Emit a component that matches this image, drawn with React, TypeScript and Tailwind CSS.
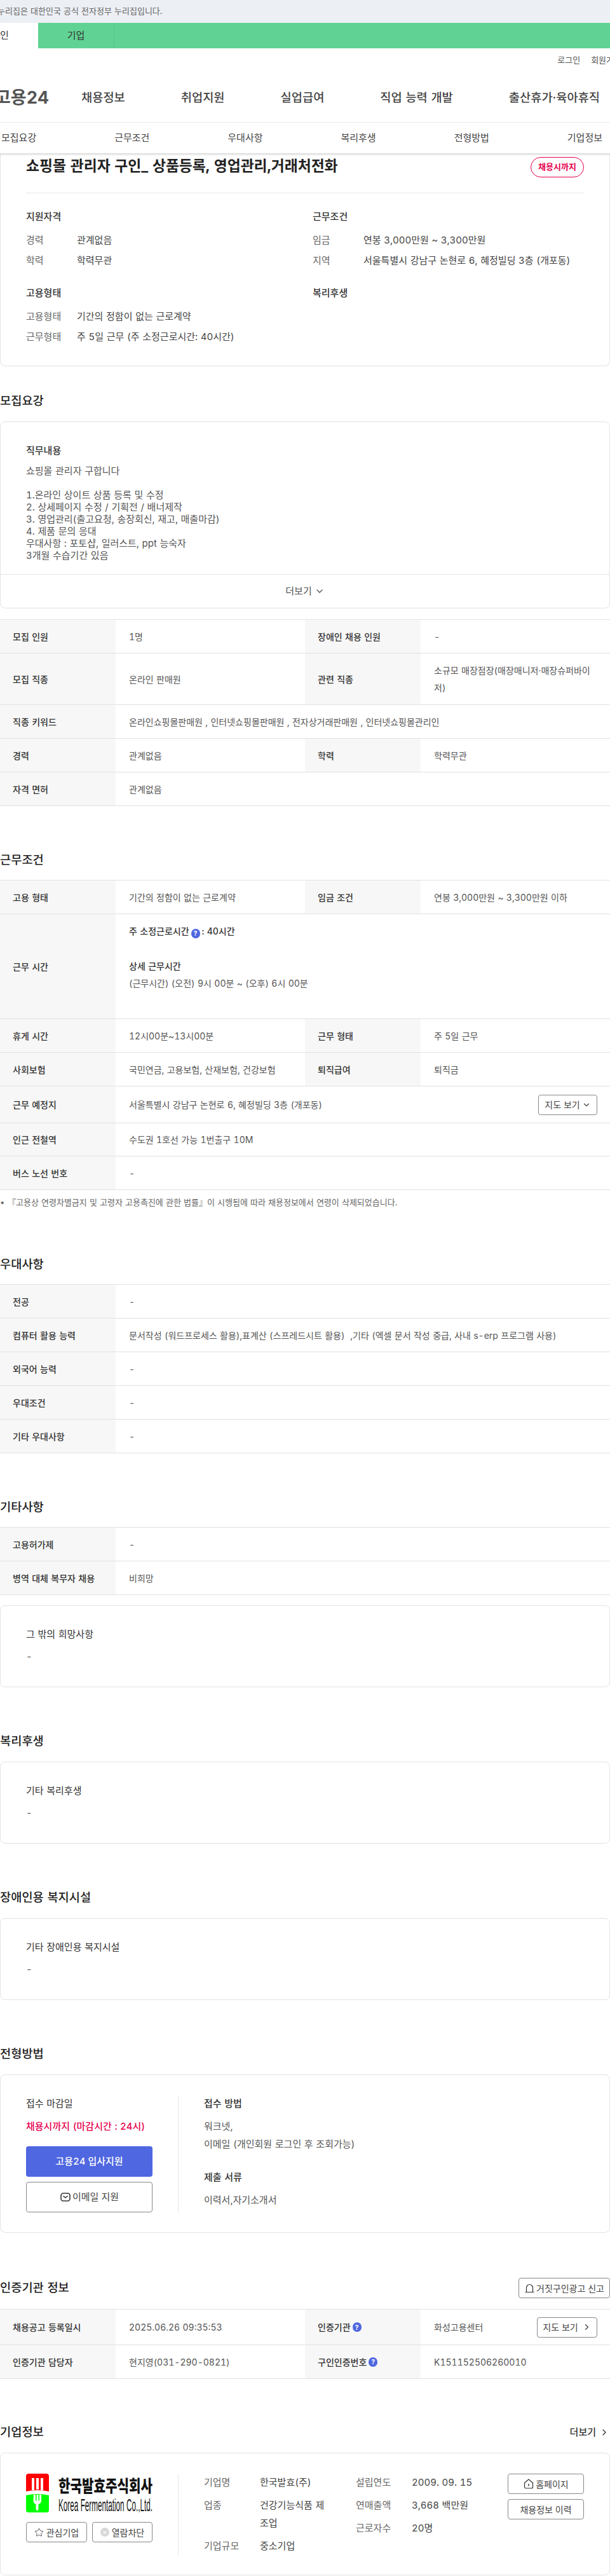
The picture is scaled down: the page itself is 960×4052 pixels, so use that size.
import type { ReactNode } from "react"
import { ChevronDown, ChevronRight, Star } from "lucide-react"

const font = '"Inter", "Noto Sans CJK KR", sans-serif'

function Help() {
  return (
    <span className="mx-[3px] inline-flex h-[15px] w-[14px] items-center justify-center rounded-full bg-[#4f67e0] align-[-2px] text-[10px] font-bold leading-none text-white">
      ?
    </span>
  )
}

function Heading({ children }: { children: ReactNode }) {
  return <h2 className="text-[18.7px] font-medium leading-[28px] text-[#222]">{children}</h2>
}

function Card({ className = "", children }: { className?: string; children: ReactNode }) {
  return <div className={`rounded-[8px] border border-[#e3e3e3] bg-white ${className}`}>{children}</div>
}

function Th({ children }: { children: ReactNode }) {
  return (
    <div className="flex items-center bg-[#f7f7f7] pl-5 text-[14px] font-medium text-[#333]">{children}</div>
  )
}

function Td({ wide, children }: { wide?: boolean; children: ReactNode }) {
  return (
    <div className={`flex items-center pl-[21px] pr-[20px] text-[14px] leading-[27px] text-[#555] ${wide ? "col-span-3" : ""}`}>
      <div className="w-full">{children}</div>
    </div>
  )
}

type Row = { h?: string; cells: [ReactNode, ReactNode] | [ReactNode, ReactNode, ReactNode, ReactNode] }

function Table({ rows }: { rows: Row[] }) {
  return (
    <div className="mt-[17px] border-b border-[#e2e2e2]">
      {rows.map((row, i) => (
        <div
          key={i}
          className={`grid grid-cols-[182px_298px_182px_298px] border-t border-[#e2e2e2] ${row.h ?? "h-[53px]"}`}
        >
          <Th>{row.cells[0]}</Th>
          {row.cells.length === 2 ? (
            <Td wide>{row.cells[1]}</Td>
          ) : (
            <>
              <Td>{row.cells[1]}</Td>
              <Th>{row.cells[2]}</Th>
              <Td>{row.cells[3]}</Td>
            </>
          )}
        </div>
      ))}
    </div>
  )
}

function InfoGroup({ title, rows }: { title: string; rows: [string, string][] }) {
  return (
    <div>
      <h3 className="text-[15px] font-medium leading-6 text-[#333]">{title}</h3>
      <dl className="mt-[9px]">
        {rows.map(([k, v]) => (
          <div key={k} className="flex h-8 items-center text-[15px]">
            <dt className="w-[80px] text-[#666]">{k}</dt>
            <dd className="text-[#444]">{v}</dd>
          </div>
        ))}
      </dl>
    </div>
  )
}

function TextCard({ title, children }: { title: string; children: ReactNode }) {
  return (
    <Card className="px-10 pb-9 pt-[33px]">
      <h3 className="text-[15px] leading-6 text-[#333]">{title}</h3>
      <p className="mt-3 text-[15px] leading-[22px] text-[#555]">{children}</p>
    </Card>
  )
}

function OutlineButton({ className = "", children }: { className?: string; children: ReactNode }) {
  return (
    <button className={`flex items-center justify-center rounded-[4px] border border-[#888] bg-white text-[#444] ${className}`}>
      {children}
    </button>
  )
}

function Logo() {
  return (
    <svg width="199" height="61" viewBox="0 0 199 61" className="block">
      <path d="M4 0H32a4 4 0 0 1 4 4V28Q18 24 0 28V4a4 4 0 0 1 4-4Z" fill="#f00" />
      <path d="M0 34Q18 30 36 34V57a4 4 0 0 1-4 4H4a4 4 0 0 1-4-4Z" fill="#0f0" />
      <path d="M9 7h4v19H9ZM16 7h4v18h-4ZM23 7h4v19h-4Z" fill="#fff" />
      <path d="M12 33h3v8q0 2 1.5 2V33h3v10q1.500 0 1.500-2v-8h3v9q0 5-4.500 6v8q0 2-2 2t-2-2v-8q-4-1-4-6Z" fill="#fff" />
      <text
        x="51"
        y="20.500"
        transform="scale(1 1.4)"
        fontSize="19"
        fontWeight="900"
        fill="#111"
        textLength="148"
        lengthAdjust="spacingAndGlyphs"
        fontFamily={font}
      >
        한국발효주식회사
      </text>
      <text
        x="51"
        y="59"
        fontSize="28"
        fill="#111"
        textLength="148"
        lengthAdjust="spacingAndGlyphs"
        fontFamily='"Liberation Sans", sans-serif'
      >
        Korea Fermentation Co.,Ltd.
      </text>
    </svg>
  )
}

const mainNav = ["채용정보", "취업지원", "실업급여", "직업 능력 개발", "출산휴가·육아휴직"]
const subNav = ["모집요강", "근무조건", "우대사항", "복리후생", "전형방법", "기업정보"]

const jobLines = `쇼핑몰 관리자 구합니다

1.온라인 상이트 상품 등록 및 수정
2. 상세페이지 수정 / 기획전 / 배너제작
3. 영업관리(출고요청, 송장회신, 재고, 매출마감)
4. 제품 문의 응대
우대사항 : 포토샵, 일러스트, ppt 능숙자
3개월 수습기간 있음`

export default function App() {
  return (
    <div
      className="w-full overflow-hidden bg-white text-[#444] tabular-nums [word-spacing:0.04em]"
      style={{ fontFamily: font }}
    >
      <div className="flex h-9 items-center whitespace-nowrap bg-[#eceff4] text-[13px] text-[#666]">
        <span className="-ml-[20px]">이 누리집은 대한민국 공식 전자정부 누리집입니다.</span>
      </div>

      <div className="flex h-10 bg-[#60d394] text-[15px] text-[#333]">
        <div className="-ml-[60px] flex w-[120px] items-center justify-center bg-white">개인</div>
        <div className="flex w-[120px] items-center justify-center border-r border-[#55c587]">기업</div>
      </div>

      <div className="mt-[9px] flex h-5 justify-end gap-[17px] whitespace-nowrap text-[13px] text-[#555]">
        <span>로그인</span>
        <span className="-mr-[18px]">회원가입</span>
      </div>

      <div className="mt-[29px] flex h-10 items-center whitespace-nowrap text-[#444]">
        <div className="-ml-[8px] w-[136px] shrink-0 text-[27px] font-bold text-[#555]">고용24</div>
        <nav className="flex gap-[88px] text-[18.7px] font-medium">
          {mainNav.map((n) => (
            <a key={n}>{n}</a>
          ))}
        </nav>
      </div>

      <div className="relative z-10 mt-[18px] flex h-[49px] items-center justify-between border-t border-[#eee] bg-white pl-[2px] pr-[12px] text-[15px] text-[#444] shadow-[0_2px_3px_rgba(0,0,0,0.16)]">
        {subNav.map((n) => (
          <a key={n}>{n}</a>
        ))}
      </div>

      <div className="rounded-b-[8px] border border-t-0 border-[#e3e3e3] px-10 pb-[29px] pt-[6px]">
        <div className="flex items-start justify-between border-b border-[#e9e9e9] pb-[24px]">
          <h1 className="text-[22.8px] font-bold leading-[28px] text-[#222]">
            쇼핑몰 관리자 구인_ 상품등록, 영업관리,거래처전화
          </h1>
          <span className="flex h-8 w-[84px] items-center justify-center rounded-full border border-[#e6004d] text-[13px] font-bold text-[#e6004d]">
            채용시까지
          </span>
        </div>
        <div className="mt-[25px] grid grid-cols-[451px_1fr] gap-y-[23px]">
          <InfoGroup title="지원자격" rows={[["경력", "관계없음"], ["학력", "학력무관"]]} />
          <InfoGroup
            title="근무조건"
            rows={[
              ["임금", "연봉 3,000만원 ~ 3,300만원"],
              ["지역", "서울특별시 강남구 논현로 6, 혜정빌딩 3층 (개포동)"],
            ]}
          />
          <InfoGroup
            title="고용형태"
            rows={[
              ["고용형태", "기간의 정함이 없는 근로계약"],
              ["근무형태", "주 5일 근무 (주 소정근로시간: 40시간)"],
            ]}
          />
          <InfoGroup title="복리후생" rows={[]} />
        </div>
      </div>

      <section className="mt-[41px]">
        <Heading>모집요강</Heading>
        <Card className="mt-[18px]">
          <div className="border-b border-[#e3e3e3] px-10 pb-[20px] pt-[33px]">
            <h3 className="text-[15px] font-medium leading-6 text-[#333]">직무내용</h3>
            <p className="mt-[10px] whitespace-pre-line text-[15px] leading-[19px] text-[#555]">{jobLines}</p>
          </div>
          <div className="flex h-[52px] items-center justify-center gap-1 text-[15px] text-[#555]">
            더보기 <ChevronDown size={16} strokeWidth={2} />
          </div>
        </Card>
        <Table
          rows={[
            { cells: ["모집 인원", "1명", "장애인 채용 인원", "-"] },
            {
              h: "h-[81px]",
              cells: ["모집 직종", "온라인 판매원", "관련 직종", "소규모 매장점장(매장매니저·매장슈퍼바이저)"],
            },
            { cells: ["직종 키워드", "온라인쇼핑몰판매원 , 인터넷쇼핑몰판매원 , 전자상거래판매원 , 인터넷쇼핑몰관리인"] },
            { cells: ["경력", "관계없음", "학력", "학력무관"] },
            { cells: ["자격 면허", "관계없음"] },
          ]}
        />
      </section>

      <section className="mt-[71px]">
        <Heading>근무조건</Heading>
        <Table
          rows={[
            { cells: ["고용 형태", "기간의 정함이 없는 근로계약", "임금 조건", "연봉 3,000만원 ~ 3,300만원 이하"] },
            {
              h: "h-[165px]",
              cells: [
                "근무 시간",
                <>
                  <p className="font-medium text-[#333]">
                    주 소정근로시간
                    <Help />: 40시간
                  </p>
                  <p className="mt-[28px] font-medium text-[#333]">상세 근무시간</p>
                  <p>(근무시간) (오전) 9시 00분 ~ (오후) 6시 00분</p>
                  <p className="h-[29px]" />
                </>,
              ],
            },
            { cells: ["휴게 시간", "12시00분~13시00분", "근무 형태", "주 5일 근무"] },
            { cells: ["사회보험", "국민연금, 고용보험, 산재보험, 건강보험", "퇴직급여", "퇴직금"] },
            {
              h: "h-[58px]",
              cells: [
                "근무 예정지",
                <div className="flex items-center justify-between">
                  서울특별시 강남구 논현로 6, 혜정빌딩 3층 (개포동)
                  <OutlineButton className="h-8 w-[93px] gap-[3px] text-[14px]">
                    지도 보기 <ChevronDown size={14} />
                  </OutlineButton>
                </div>,
              ],
            },
            { h: "h-[52px]", cells: ["인근 전철역", "수도권 1호선 가능 1번출구 10M"] },
            { cells: ["버스 노선 번호", "-"] },
          ]}
        />
        <p className="mt-[10px] flex h-5 items-center text-[13px] text-[#666]">
          <span className="w-[12px]">•</span>『고용상 연령차별금지 및 고령자 고용촉진에 관한 법률』이 시행됨에 따라 채용정보에서 연령이 삭제되었습니다.
        </p>
      </section>

      <section className="mt-[73px]">
        <Heading>우대사항</Heading>
        <Table
          rows={[
            { cells: ["전공", "-"] },
            { cells: ["컴퓨터 활용 능력", "문서작성 (워드프로세스 활용),표계산 (스프레드시트 활용) \u00a0,기타 (엑셀 문서 작성 중급, 사내 s-erp 프로그램 사용)"] },
            { cells: ["외국어 능력", "-"] },
            { cells: ["우대조건", "-"] },
            { cells: ["기타 우대사항", "-"] },
          ]}
        />
      </section>

      <section className="mt-[71px]">
        <Heading>기타사항</Heading>
        <Table
          rows={[
            { cells: ["고용허가제", "-"] },
            { cells: ["병역 대체 복무자 채용", "비희망"] },
          ]}
        />
        <div className="mt-4">
          <TextCard title="그 밖의 희망사항">-</TextCard>
        </div>
      </section>

      <section className="mt-[71px]">
        <Heading>복리후생</Heading>
        <div className="mt-[18px]">
          <TextCard title="기타 복리후생">-</TextCard>
        </div>
      </section>

      <section className="mt-[71px]">
        <Heading>장애인용 복지시설</Heading>
        <div className="mt-[18px]">
          <TextCard title="기타 장애인용 복지시설">-</TextCard>
        </div>
      </section>

      <section className="mt-[71px]">
        <Heading>전형방법</Heading>
        <Card className="mt-[18px] flex px-10 pb-[31px] pt-8">
          <div className="w-[199px] shrink-0">
            <h3 className="text-[15px] leading-[26px] text-[#333]">접수 마감일</h3>
            <p className="mt-[11px] text-[15px] font-medium leading-6 text-[#e6004d]">채용시까지 (마감시간 : 24시)</p>
            <button className="mt-[19px] h-12 w-full rounded-[4px] bg-[#4f67e0] text-[15px] font-medium text-white">
              고용24 입사지원
            </button>
            <OutlineButton className="mt-2 h-12 w-full gap-[2px] text-[15px]">
              <svg width="18" height="18" viewBox="0 0 18 18" fill="none" stroke="#333" strokeWidth="1.6">
                <rect x="2" y="3" width="14" height="12" rx="3.500" />
                <path d="M6 7.500l3 2.500 3-2.500" strokeLinecap="round" strokeLinejoin="round" />
              </svg>
              이메일 지원
            </OutlineButton>
          </div>
          <div className="ml-[40px] border-l border-[#e6e6e6] pl-10">
            <h3 className="text-[15px] font-medium leading-[26px] text-[#333]">접수 방법</h3>
            <p className="mt-[9px] text-[15px] leading-[28px] text-[#555]">
              워크넷,
              <br />
              이메일 (개인회원 로그인 후 조회가능)
            </p>
            <h3 className="mt-[25px] text-[15px] font-medium leading-[26px] text-[#333]">제출 서류</h3>
            <p className="mt-[9px] text-[15px] leading-[28px] text-[#555]">이력서,자기소개서</p>
          </div>
        </Card>
      </section>

      <section className="mt-[71px]">
        <div className="flex items-center justify-between">
          <Heading>인증기관 정보</Heading>
          <OutlineButton className="h-8 w-[144px] gap-[2px] text-[14px]">
            <svg width="17" height="17" viewBox="0 0 17 17" fill="none" stroke="#333" strokeWidth="1.2">
              <path d="M3.500 14.500V7.500a5 5 0 0 1 10 0v7Z M1.500 14.500h14" strokeLinejoin="round" />
            </svg>
            거짓구인광고 신고
          </OutlineButton>
        </div>
        <Table
          rows={[
            {
              h: "h-[56px]",
              cells: [
                "채용공고 등록일시",
                "2025.06.26 09:35:53",
                <>
                  인증기관
                  <Help />
                </>,
                <div className="flex items-center justify-between">
                  화성고용센터
                  <OutlineButton className="h-8 w-[95px] gap-[6px] text-[14px]">
                    지도 보기 <ChevronRight size={15} />
                  </OutlineButton>
                </div>,
              ],
            },
            {
              cells: [
                "인증기관 담당자",
                "현지영(031-290-0821)",
                <>
                  구인인증번호
                  <Help />
                </>,
                "K151152506260010",
              ],
            },
          ]}
        />
      </section>

      <section className="mb-px mt-[70px]">
        <div className="flex items-center justify-between">
          <Heading>기업정보</Heading>
          <a className="flex items-center gap-[5px] pr-[1px] text-[15px] font-medium text-[#333]">
            더보기 <ChevronRight size={16} />
          </a>
        </div>
        <Card className="mt-[18px] flex px-10 pb-[31px] pt-8">
          <div className="w-[199px] shrink-0">
            <Logo />
            <div className="mt-[15px] flex justify-between text-[14px]">
              <OutlineButton className="h-8 w-[96px] gap-1">
                <Star size={15} strokeWidth={1.400} />
                관심기업
              </OutlineButton>
              <OutlineButton className="h-8 w-[95px] gap-1">
                <span className="flex h-[14px] w-[14px] items-center justify-center rounded-full bg-[#d8d8d8] text-[11px] leading-none text-white">
                  ×
                </span>
                열람차단
              </OutlineButton>
            </div>
          </div>
          <div className="ml-[40px] grid grid-cols-[239px_239px] border-l border-[#e6e6e6] pl-10 text-[15px]">
            <dl className="flex flex-col gap-2">
              <div className="flex leading-[28px]">
                <dt className="w-[88px] shrink-0 text-[#666]">기업명</dt>
                <dd className="w-[105px] whitespace-nowrap">한국발효(주)</dd>
              </div>
              <div className="flex leading-[28px]">
                <dt className="w-[88px] shrink-0 text-[#666]">업종</dt>
                <dd className="w-[105px]">건강기능식품 제조업</dd>
              </div>
              <div className="flex leading-[28px]">
                <dt className="w-[88px] shrink-0 text-[#666]">기업규모</dt>
                <dd className="w-[105px]">중소기업</dd>
              </div>
            </dl>
            <dl className="flex flex-col gap-2">
              <div className="flex leading-[28px]">
                <dt className="w-[88px] shrink-0 text-[#666]">설립연도</dt>
                <dd>2009. 09. 15</dd>
              </div>
              <div className="flex leading-[28px]">
                <dt className="w-[88px] shrink-0 text-[#666]">연매출액</dt>
                <dd>3,668 백만원</dd>
              </div>
              <div className="flex leading-[28px]">
                <dt className="w-[88px] shrink-0 text-[#666]">근로자수</dt>
                <dd>20명</dd>
              </div>
            </dl>
          </div>
          <div className="ml-auto flex w-[120px] flex-col gap-2 text-[14px]">
            <OutlineButton className="h-8 gap-[2px]">
              <svg width="18" height="18" viewBox="0 0 18 18" fill="none" stroke="#333" strokeWidth="1.200">
                <path d="M2.500 7.500L9 2l6.500 5.500V14a2 2 0 0 1-2 2h-9a2 2 0 0 1-2-2Z" strokeLinejoin="round" />
                <path d="M9 9v3.500" strokeWidth="1.400" />
              </svg>
              홈페이지
            </OutlineButton>
            <OutlineButton className="h-8">채용정보 이력</OutlineButton>
          </div>
        </Card>
      </section>
    </div>
  )
}
